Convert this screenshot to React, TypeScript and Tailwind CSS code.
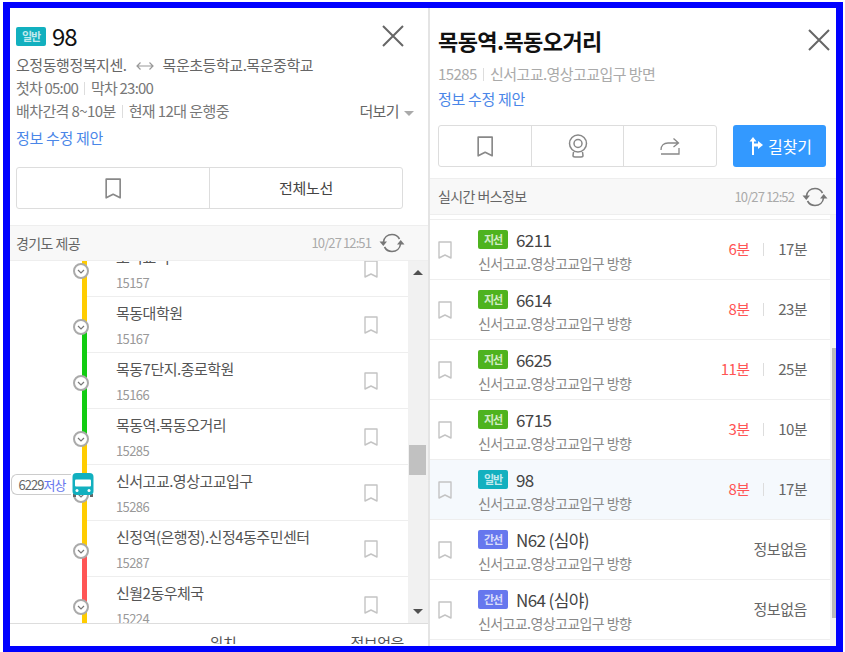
import type { ReactNode } from "react";

const font = "[font-family:'Noto_Sans_CJK_KR','Noto_Sans',sans-serif]";

const Bookmark = ({ size = 20, color = "#c4c4c4" }: { size?: number; color?: string }) => (
  <svg width={(size * 14) / 18} height={size} viewBox="0 0 14 18" fill="none" stroke={color} strokeWidth="1.4">
    <path d="M1 1h12v16l-6-3-6 3z" strokeLinejoin="round" />
  </svg>
);

const CloseIcon = () => (
  <svg width="22" height="22" viewBox="0 0 22 22" stroke="#666" strokeWidth="2" fill="none">
    <path d="M1 1l20 20M21 1L1 21" />
  </svg>
);

const Refresh = () => (
  <svg width="26" height="22" viewBox="0 0 26 22" fill="none" stroke="#777" strokeWidth="1.6">
    <path d="M4.5 10C5 5.500 8.500 2.500 13 2.500c3.500 0 6 1.700 7.500 4.500" />
    <path d="M21.500 12c-.5 4.500-4 7.500-8.500 7.500-3.500 0-6-1.700-7.500-4.500" />
    <path d="M0.500 9.500h7.500L4.300 14z" fill="#777" stroke="none" />
    <path d="M18 12.500h7.500L21.700 8z" fill="#777" stroke="none" />
  </svg>
);

const Badge = ({ label, color }: { label: string; color: string }) => (
  <span
    className={`inline-flex h-[19px] w-[30px] shrink-0 items-center justify-center rounded-[2px] text-[11px] leading-none font-bold tracking-[-1px] text-white/75 ${color}`}
  >
    {label}
  </span>
);

const Sep = () => <span className="mx-[6px] inline-block h-[13px] w-px bg-[#ddd] align-[-1px]" />;

const Chevron = ({ y = 0 }: { y?: number }) => (
  <span
    className="absolute left-[-9px] flex h-[16px] w-[16px] items-center justify-center rounded-full border-2 border-[#aaa] bg-white"
    style={{ top: y }}
  >
    <svg width="8" height="5" viewBox="0 0 8 5" fill="none" stroke="#777" strokeWidth="1.200">
      <path d="M1 1l3 3 3-3" />
    </svg>
  </span>
);

const stops = [
  { name: "오목교역", id: "15157", top: "#ffcc00", bottom: "#ffcc00" },
  { name: "목동대학원", id: "15167", top: "#ffcc00", bottom: "#11cc11" },
  { name: "목동7단지.종로학원", id: "15166", top: "#11cc11", bottom: "#11cc11" },
  { name: "목동역.목동오거리", id: "15285", top: "#11cc11", bottom: "#ffcc00" },
  { name: "신서고교.영상고교입구", id: "15286", top: "#ffcc00", bottom: "#ffcc00", bus: true },
  { name: "신정역(은행정).신정4동주민센터", id: "15287", top: "#ffcc00", bottom: "#ff5555" },
  { name: "신월2동우체국", id: "15224", top: "#ff5555", bottom: "#ffcc00" },
];

const StopRow = ({ stop }: { stop: (typeof stops)[number] }) => (
  <div className="flex h-[56px] shrink-0">
    <div className="relative flex w-[77px] shrink-0 justify-end">
      <div className="relative flex h-full w-[5px] flex-col">
        <div className="h-[30px]" style={{ background: stop.top }} />
        <div className="flex-1" style={{ background: stop.bottom }} />
        <Chevron y={22} />
        {stop.bus && (
          <svg className="absolute top-[8px] left-[-10px]" width="22" height="24" viewBox="0 0 22 24">
            <path d="M1 21h3v3H1zM18 21h3v3h-3z" fill="#666" />
            <rect x="0.500" y="0" width="21" height="22" rx="4" fill="#12b0bf" />
            <rect x="3" y="6.500" width="16" height="7" rx="1" fill="#fff" />
            <circle cx="5" cy="17.500" r="1.500" fill="#fff" />
            <circle cx="17" cy="17.500" r="1.500" fill="#fff" />
          </svg>
        )}
      </div>
      {stop.bus && (
        <span className="absolute top-[9px] left-[1px] flex h-[21px] w-[60px] items-center justify-center rounded-l-[6px] border border-r-0 border-[#ccc] bg-white pl-[1px] text-[13px] tracking-[-1px] whitespace-nowrap text-[#666]">
          6229<span className="text-[#6677ee]">저상</span>
        </span>
      )}
    </div>
    <div className="flex flex-1 items-center justify-between border-b border-[#eee] pr-[30px] pl-[29px]">
      <div className="flex flex-col">
        <span className="text-[15px] leading-[24px] tracking-[-0.5px] whitespace-nowrap text-[#555]">{stop.name}</span>
        <span className="mt-[4px] text-[13px] leading-[20px] tracking-[-0.6px] text-[#999]">{stop.id}</span>
      </div>
      <Bookmark size={18} />
    </div>
  </div>
);

const LeftPanel = () => (
  <section className="flex w-[420px] shrink-0 flex-col overflow-hidden border-r-2 border-[#e4e4e4] bg-white">
    <div className="relative flex h-[217px] shrink-0 flex-col px-[6px] pt-[16px]">
      <div className="flex h-[24px] items-center gap-[6px]">
        <Badge label="일반" color="bg-[#12b0bf]" />
        <span className="text-[24px] leading-none tracking-[-1px] text-[#111]">98</span>
      </div>
      <div className="absolute top-[17px] right-[24px]">
        <CloseIcon />
      </div>
      <div className="mt-[6px] flex h-[23px] items-center text-[15px] tracking-[-0.45px] whitespace-nowrap text-[#666]">
        오정동행정복지센.
        <svg className="mx-[9px]" width="18" height="10" viewBox="0 0 18 10" fill="none" stroke="#999" strokeWidth="1.200">
          <path d="M1 5h16M4.500 1.500L1 5l3.500 3.500M13.500 1.500L17 5l-3.500 3.500" />
        </svg>
        목운초등학교.목운중학교
      </div>
      <div className="flex h-[23px] items-center text-[15px] tracking-[-0.8px] text-[#777]">
        첫차 05:00
        <Sep />
        막차 23:00
      </div>
      <div className="flex h-[23px] items-center justify-between pr-[8px] text-[15px] tracking-[-0.6px] text-[#777]">
        <span className="flex items-center">
          배차간격 8~10분
          <Sep />
          현재 12대 운행중
        </span>
        <span className="flex items-center gap-[5px] text-[#666]">
          더보기
          <span className="mt-[3px] h-0 w-0 border-x-[5px] border-t-[5px] border-x-transparent border-t-[#aaa]" />
        </span>
      </div>
      <a className="mt-[4px] flex h-[23px] items-center text-[15px] tracking-[-0.3px] text-[#4a86e8]">정보 수정 제안</a>
      <div className="mt-[17px] flex h-[42px] w-[387px] rounded-[3px] border border-[#ddd]">
        <div className="flex w-[193px] items-center justify-center border-r border-[#ddd]">
          <Bookmark size={21} color="#888" />
        </div>
        <div className="flex flex-1 items-center justify-center text-[15px] tracking-[-0.3px] text-[#444]">전체노선</div>
      </div>
    </div>
    <div className="flex h-[36px] shrink-0 items-center justify-between border-y border-[#eee] bg-[#f8f8f8] pr-[23px] pl-[6px]">
      <span className="text-[14px] tracking-[-0.6px] text-[#666]">경기도 제공</span>
      <span className="flex items-center gap-[8px] text-[13px] tracking-[-0.9px] text-[#aaa]">
        10/27 12:51
        <Refresh />
      </span>
    </div>
    <div className="flex h-[363px] shrink-0 overflow-hidden border-b border-[#ddd]">
      <div className="min-w-0 flex-1 overflow-hidden">
        <div className="mt-[-20px] flex flex-col">
          {stops.map((s) => (
            <StopRow key={s.id} stop={s} />
          ))}
        </div>
      </div>
      <div className="flex w-[20px] shrink-0 flex-col items-center bg-[#f1f1f1] pr-[1px]">
        <span className="mt-[9px] h-0 w-0 border-x-[5px] border-b-[5px] border-x-transparent border-b-[#505050]" />
        <div className="mt-[170px] h-[30px] w-[17px] bg-[#c1c1c1]" />
        <span className="mt-auto mb-[9px] h-0 w-0 border-x-[5px] border-t-[5px] border-x-transparent border-t-[#505050]" />
      </div>
    </div>
    <div className="flex h-[20px] justify-end overflow-hidden pt-[9px] pr-[24px] text-[15px] leading-[20px] tracking-[-0.4px] text-[#555]">
      <span className="mr-[114px]">위치</span>
      <span>정보없음</span>
    </div>
  </section>
);

type Arrival = { type: string; color: string; no: string; first?: string; second?: string; on?: boolean };

const arrivals: Arrival[] = [
  { type: "지선", color: "bg-[#4eb31f]", no: "6211", first: "6분", second: "17분" },
  { type: "지선", color: "bg-[#4eb31f]", no: "6614", first: "8분", second: "23분" },
  { type: "지선", color: "bg-[#4eb31f]", no: "6625", first: "11분", second: "25분" },
  { type: "지선", color: "bg-[#4eb31f]", no: "6715", first: "3분", second: "10분" },
  { type: "일반", color: "bg-[#12b0bf]", no: "98", first: "8분", second: "17분", on: true },
  { type: "간선", color: "bg-[#6677ee]", no: "N62 (심야)" },
  { type: "간선", color: "bg-[#6677ee]", no: "N64 (심야)" },
];

const ArrivalRow = ({ bus }: { bus: Arrival }) => (
  <div className={`flex h-[60px] shrink-0 items-center border-b border-[#eee] pr-[23px] pl-[8px] ${bus.on ? "bg-[#f5f9fd]" : ""}`}>
    <Bookmark size={18} />
    <div className="ml-[26px] flex flex-col">
      <div className="flex h-[26px] items-center gap-[8px]">
        <Badge label={bus.type} color={bus.color} />
        <span className="text-[17px] tracking-[-0.6px] whitespace-nowrap text-[#444]">{bus.no}</span>
      </div>
      <span className="text-[14px] leading-[20px] tracking-[-0.6px] whitespace-nowrap text-[#888]">신서고교.영상고교입구 방향</span>
    </div>
    {bus.first ? (
      <div className="ml-auto flex items-center text-[15px] tracking-[-0.6px]">
        <span className="text-[#ff5555]">{bus.first}</span>
        <span className="mx-[14px] h-[13px] w-px bg-[#ddd]" />
        <span className="text-[#666]">{bus.second}</span>
      </div>
    ) : (
      <span className="ml-auto text-[15px] tracking-[-0.4px] text-[#666]">정보없음</span>
    )}
  </div>
);

const IconCell = ({ children, last }: { children: ReactNode; last?: boolean }) => (
  <div className={`flex flex-1 items-center justify-center ${last ? "" : "border-r border-[#ddd]"}`}>{children}</div>
);

const RightPanel = () => (
  <section className="flex min-w-0 flex-1 flex-col overflow-hidden bg-white">
    <div className="relative flex h-[170px] shrink-0 flex-col px-[8px] pt-[16px]">
      <h1 className="h-[32px] text-[22px] leading-[32px] font-bold tracking-[-0.6px] whitespace-nowrap text-[#111]">목동역.목동오거리</h1>
      <div className="absolute top-[21px] right-[6px]">
        <CloseIcon />
      </div>
      <div className="mt-[7px] flex h-[22px] items-center text-[15px] tracking-[-0.55px] text-[#aaa]">
        15285
        <Sep />
        신서고교.영상고교입구 방면
      </div>
      <a className="mt-[3px] flex h-[23px] items-center text-[15px] tracking-[-0.3px] text-[#4a86e8]">정보 수정 제안</a>
      <div className="mt-[14px] flex gap-[16px]">
        <div className="flex h-[42px] w-[279px] rounded-[3px] border border-[#ddd]">
          <IconCell>
            <Bookmark size={21} color="#888" />
          </IconCell>
          <IconCell>
            <svg width="22" height="24" viewBox="0 0 22 24" fill="none" stroke="#888" strokeWidth="1.500">
              <circle cx="11" cy="9.500" r="8.500" />
              <circle cx="11" cy="9.500" r="4" />
              <path d="M6.500 18l-.5 3.500c0 1 1 1.500 2 1.500h6c1 0 2-.5 2-1.500L15.500 18" />
            </svg>
          </IconCell>
          <IconCell last>
            <svg width="20" height="20" viewBox="0 0 20 20" fill="none" stroke="#888" strokeWidth="1.300">
              <path d="M1 18h18v-6M1 14c0-5 3-7 7-7h10M13.500 2.500L18.500 7l-5 4" />
            </svg>
          </IconCell>
        </div>
        <button className="flex h-[42px] w-[93px] items-center justify-center gap-[5px] rounded-[3px] bg-[#3399ff] text-[16px] tracking-[-0.1px] text-white">
          <svg width="16" height="18" viewBox="0 0 16 18" fill="#fff">
            <path d="M5 18h2V9.500h4V12l5-4-5-4v2.500H7V4.500h2.500L6 0 2.500 4.500H5z" />
          </svg>
          길찾기
        </button>
      </div>
    </div>
    <div className="flex h-[37px] shrink-0 items-center justify-between border-y border-[#eee] bg-[#f8f8f8] pr-[8px] pl-[8px]">
      <span className="text-[14px] tracking-[-0.6px] text-[#666]">실시간 버스정보</span>
      <span className="flex items-center gap-[8px] text-[13px] tracking-[-0.9px] text-[#aaa]">
        10/27 12:52
        <Refresh />
      </span>
    </div>
    <div className="flex min-h-0 flex-1 overflow-hidden">
      <div className="min-w-0 flex-1 overflow-hidden pt-[4px]">
        <div className="flex flex-col border-t border-[#eee]">
          {arrivals.map((b) => (
            <ArrivalRow key={b.no} bus={b} />
          ))}
        </div>
      </div>
      <div className="flex w-[6px] shrink-0 flex-col bg-[#f4f4f4]">
        <div className="mt-[133px] h-[270px] w-[4px] self-end bg-[#bbb]" />
      </div>
    </div>
  </section>
);

export default function App() {
  return (
    <div className={`h-[652px] w-[845px] overflow-hidden bg-white pt-[2px] pr-[2px] pl-[3px] ${font}`}>
      <div className="flex h-[650px] w-[840px] border-[7px] border-t-[6px] border-b-[6px] border-[#0000ff]">
        <LeftPanel />
        <RightPanel />
      </div>
    </div>
  );
}
